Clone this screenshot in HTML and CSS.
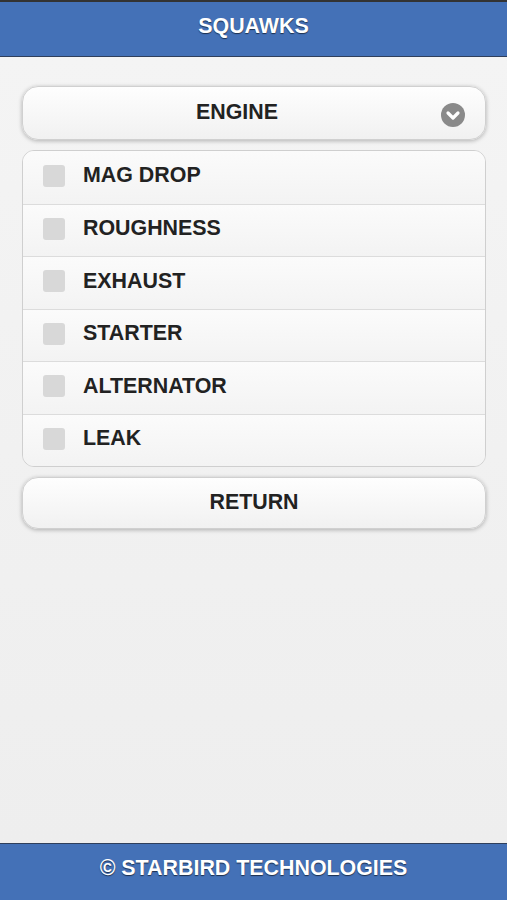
FILE: index.html
```html
<!DOCTYPE html>
<html>
<head>
<meta charset="utf-8">
<link rel="stylesheet" href="styles.css">
</head>
<body>
<div class="page">
  <header class="bar bar-top"><h1>SQUAWKS</h1></header>
  <main class="content">
    <div class="btn select">
      <span class="select-label">ENGINE</span>
      <span class="select-icon">
        <svg width="24" height="24" viewBox="0 0 24 24"><circle cx="12" cy="12" r="12" fill="#8a8a8a"/><path d="M7 10 L12 15 L17 10" fill="none" stroke="#fff" stroke-width="3.2" stroke-linecap="round" stroke-linejoin="round"/></svg>
      </span>
    </div>
    <ul class="list">
      <li class="row"><span class="check"></span><span class="label">MAG DROP</span></li>
      <li class="row"><span class="check"></span><span class="label">ROUGHNESS</span></li>
      <li class="row"><span class="check"></span><span class="label">EXHAUST</span></li>
      <li class="row"><span class="check"></span><span class="label">STARTER</span></li>
      <li class="row"><span class="check"></span><span class="label">ALTERNATOR</span></li>
      <li class="row"><span class="check"></span><span class="label">LEAK</span></li>
    </ul>
    <div class="btn return">RETURN</div>
  </main>
  <footer class="bar bar-bottom"><h2>© STARBIRD TECHNOLOGIES</h2></footer>
</div>
</body>
</html>
```
FILE: styles.css
```css
* { box-sizing: border-box; }
html, body { margin: 0; padding: 0; }
body {
  font-family: "Liberation Sans", Arial, sans-serif;
  background: #f0f0f0;
  color: #222;
}
.page {
  min-height: 100vh;
  display: flex;
  flex-direction: column;
}
.bar {
  background: #4471b7;
  color: #fff;
  text-align: center;
}
.bar h1, .bar h2 {
  margin: 0;
  font-size: 21.4px;
  font-weight: bold;
  text-shadow: 0 1px 1px #1d2f4d;
}
.bar-top {
  border-top: 2px solid #333;
  border-bottom: 1px solid #2f3f5c;
  height: 57px;
  padding-top: 12px;
}
.bar-bottom {
  border-top: 1px solid #2f3f5c;
  height: 57px;
  padding-top: 12px;
}
.content {
  flex: 1;
  padding: 29px 21px 20px 22px;
  display: flex;
  flex-direction: column;
  gap: 10px;
  background: linear-gradient(#f4f4f4, #eeeeee);
}
.btn {
  height: 54px;
  border: 1px solid #d0d0d0;
  border-radius: 16px;
  background: linear-gradient(#fefefe, #f1f1f1);
  box-shadow: 0 1px 4px rgba(0,0,0,0.28);
  font-size: 21.4px;
  font-weight: bold;
  display: flex;
  align-items: center;
  justify-content: center;
  color: #222;
}
.select {
  position: relative;
  padding: 0 54px 1px 20px;
}
.select-label { flex: 1; text-align: center; }
.select-icon {
  position: absolute;
  right: 20px;
  top: 16px;
  width: 24px;
  height: 24px;
  display: block;
}
.select-icon svg { display: block; }
.list {
  list-style: none;
  margin: 0;
  padding: 0;
  border: 1px solid #cfcfcf;
  border-radius: 12px;
  overflow: hidden;
}
.row {
  height: 52.5px;
  display: flex;
  align-items: center;
  padding: 0 0 3px 20px;
  gap: 18px;
  background: linear-gradient(#fbfbfb, #f3f3f3);
  border-top: 1px solid #dcdcdc;
  font-size: 21.4px;
  font-weight: bold;
}
.row:first-child { border-top: none; }
.check {
  width: 22px;
  height: 22px;
  border-radius: 3px;
  background: #d8d8d8;
  flex: none;
}
.return {
  height: 52px;
  padding-bottom: 2px;
}
```
